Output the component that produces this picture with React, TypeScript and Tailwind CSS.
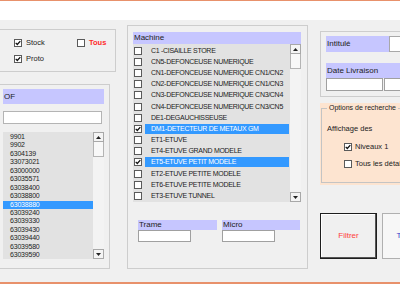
import React from "react";

const OF_ITEMS = [
  "9901",
  "9902",
  "6304139",
  "33073021",
  "63000000",
  "63035571",
  "63038400",
  "63038800",
  "63038880",
  "63039240",
  "63039330",
  "63039430",
  "63039440",
  "63039580",
  "63039590",
];

const MACHINES: { label: string; checked?: boolean }[] = [
  { label: "C1  -CISAILLE STORE" },
  { label: "CN5-DEFONCEUSE NUMERIQUE" },
  { label: "CN1-DEFONCEUSE NUMERIQUE CN1/CN2" },
  { label: "CN2-DEFONCEUSE NUMERIQUE CN1/CN3" },
  { label: "CN3-DEFONCEUSE NUMERIQUE CN3/CN4" },
  { label: "CN4-DEFONCEUSE NUMERIQUE CN3/CN5" },
  { label: "DE1-DEGAUCHISSEUSE" },
  { label: "DM1-DETECTEUR DE METAUX GM", checked: true },
  { label: "ET1-ETUVE" },
  { label: "ET4-ETUVE GRAND MODELE" },
  { label: "ET5-ETUVE PETIT MODELE", checked: true },
  { label: "ET2-ETUVE PETITE MODELE" },
  { label: "ET6-ETUVE PETITE MODELE" },
  { label: "ET3-ETUVE TUNNEL" },
];

function Check({ checked }: { checked?: boolean }) {
  return (
    <span className="w-2 h-2 shrink-0 border border-[#5a5a5a] bg-white flex items-center justify-center">
      {checked && (
        <svg width="6" height="6" viewBox="0 0 6 6">
          <path d="M0.7 2.9 L2.3 4.5 L5.3 1.1" stroke="#111" strokeWidth="1.3" fill="none" />
        </svg>
      )}
    </span>
  );
}

function ScrollBar() {
  return (
    <div className="w-[11px] shrink-0 flex flex-col bg-[#f3f3f3]">
      <div className="h-[10px] border border-[#a8a8a8] bg-[#f4f4f4] flex items-center justify-center">
        <svg width="5" height="3" viewBox="0 0 5 3">
          <path d="M0 3 L2.5 0 L5 3 Z" fill="#222" />
        </svg>
      </div>
      <div className="h-[15px] border border-t-0 border-[#b4b4b4] bg-[#f8f8f8]" />
      <div className="flex-1" />
      <div className="h-[10px] border border-[#a8a8a8] bg-[#f4f4f4] flex items-center justify-center">
        <svg width="5" height="3" viewBox="0 0 5 3">
          <path d="M0 0 L2.5 3 L5 0 Z" fill="#222" />
        </svg>
      </div>
    </div>
  );
}

export default function App() {
  return (
    <div className="w-[400px] h-[284px] overflow-hidden bg-white flex flex-col font-['Liberation_Sans',Arial,sans-serif] text-[#222]">
      <div className="h-px bg-[#e8916b]" />
      <div className="h-[19px] bg-white" />

      <div className="h-[262px] bg-[#f0f0f0] flex items-start">
        {/* left column */}
        <div className="w-[116px] shrink-0 flex flex-col">
          <div className="mt-[9px] h-[43px] border border-l-0 border-[#cdcdcd] pl-[14px] pt-[9px] flex flex-col gap-[8px] text-[7.5px] leading-[8px]">
            <div className="flex items-center">
              <div className="w-[63px] flex items-center gap-[4px]">
                <Check checked />
                <span>Stock</span>
              </div>
              <div className="flex items-center gap-[4px]">
                <Check />
                <span className="text-[#ff2a2a] font-bold">Tous</span>
              </div>
            </div>
            <div className="flex items-center gap-[4px]">
              <Check checked />
              <span>Proto</span>
            </div>
          </div>

          <div className="mt-[12px] w-[110px] h-[185px] border border-l-0 border-[#cdcdcd] pl-[3px] pt-[4px]">
            <div className="w-[101px] h-[15px] bg-[#c6c6ff] text-[8px] leading-[15px] pl-[1px]">OF</div>
            <div className="mt-[7px] w-[99px] h-[13px] border border-[#b4b4b4] bg-white" />
            <div className="mt-[8px] w-[101px] h-[127px] flex bg-[#e2e2e2]">
              <div className="flex-1 pt-[1px] text-[7px] tracking-[-0.2px]">
                {OF_ITEMS.map((it) => (
                  <div
                    key={it}
                    className={
                      "h-[8.45px] leading-[8.45px] pl-[7px] " +
                      (it === "63038880" ? "bg-[#3399ff] text-white" : "")
                    }
                  >
                    {it}
                  </div>
                ))}
              </div>
              <ScrollBar />
            </div>
          </div>
        </div>

        {/* middle column */}
        <div className="ml-[11px] mt-[5px] w-[181px] h-[244px] shrink-0 border border-[#cdcdcd] pl-[5px] pt-[6px]">
          <div className="w-[168px] h-[12px] bg-[#c6c6ff] text-[8px] leading-[12px] pl-[1px]">Machine</div>
          <div className="w-[168px] h-[158px] flex bg-[#e2e2e2]">
            <div className="flex-1 pt-[1px] text-[7px] tracking-[-0.3px]">
              {MACHINES.map((m) => (
                <div key={m.label} className="h-[11.2px] flex items-center pl-[1px] pr-[1px]">
                  <Check checked={m.checked} />
                  <span
                    className={
                      "ml-[3px] flex-1 h-[10px] leading-[10px] pl-[6px] whitespace-nowrap " +
                      (m.checked ? "bg-[#3399ff] text-white" : "")
                    }
                  >
                    {m.label}
                  </span>
                </div>
              ))}
            </div>
            <ScrollBar />
          </div>

          <div className="mt-[18px] pl-[5px] flex gap-[5px] text-[8px]">
            <div className="w-[79px] flex flex-col">
              <div className="h-[10px] leading-[10px] bg-[#c6c6ff] pl-[1px]">Trame</div>
              <div className="w-[53px] h-[12px] border border-[#a0a0a0] bg-white" />
            </div>
            <div className="w-[78px] flex flex-col">
              <div className="h-[10px] leading-[10px] bg-[#c6c6ff] pl-[1px]">Micro</div>
              <div className="w-[53px] h-[12px] border border-[#a0a0a0] bg-white" />
            </div>
          </div>
        </div>

        {/* right column */}
        <div className="ml-[12px] w-[100px] shrink-0 flex flex-col text-[8px]">
          <div className="mt-[11px] h-[66px] border border-r-0 border-[#cdcdcd] pl-[5px] pt-[4px]">
            <div className="flex h-[16px]">
              <div className="w-[63px] bg-[#c6c6ff] leading-[16px] pl-[1px]">Intitulé</div>
              <div className="flex-1 bg-white border border-[#a8a8a8] border-r-0" />
            </div>
            <div className="mt-[11px] h-[15px] bg-[#c6c6ff] leading-[15px] pl-[1px]">Date Livraison</div>
            <div className="flex h-[13px] gap-px">
              <div className="w-[57px] bg-white border border-[#a0a0a0]" />
              <div className="flex-1 bg-white border border-[#a0a0a0] border-r-0" />
            </div>
          </div>

          <div className="mt-[6px] h-[82px] bg-[#fde4d0] pt-[5px] pl-px">
            <div className="relative h-[75px] border border-r-0 border-[#c4c4c4] pl-[5px] pt-[15px]">
              <span className="absolute -top-[6px] left-[5px] bg-[#fde4d0] px-[2px] leading-[10px] text-[7px] whitespace-nowrap">
                Options de recherche
              </span>
              <div className="leading-[10px] text-[7.5px]">Affichage des</div>
              <div className="mt-[7px] pl-[17px] flex flex-col gap-[6px] text-[7.5px]">
                <div className="flex items-center gap-[3px]">
                  <Check checked />
                  <span>Niveaux 1</span>
                </div>
                <div className="flex items-center gap-[3px] whitespace-nowrap">
                  <Check />
                  <span>Tous les détails</span>
                </div>
              </div>
            </div>
          </div>

          <div className="mt-[28px] flex gap-[5px]">
            <div className="w-[57px] h-[46px] shrink-0 border border-[#1e1e1e] shadow-[inset_-1px_-1px_0_#555,inset_1px_1px_0_#fff] bg-[#f0f0f0] flex items-center justify-center text-[#ff3c3c]">
              Filtrer
            </div>
            <div className="w-[57px] h-[46px] shrink-0 border border-[#b0b0b0] bg-[#f7f7f7] flex items-center justify-center text-[#3535c8] whitespace-nowrap">
              Tableau
            </div>
          </div>
        </div>
      </div>

      <div className="h-[2px] bg-[#e8916b]" />
    </div>
  );
}
